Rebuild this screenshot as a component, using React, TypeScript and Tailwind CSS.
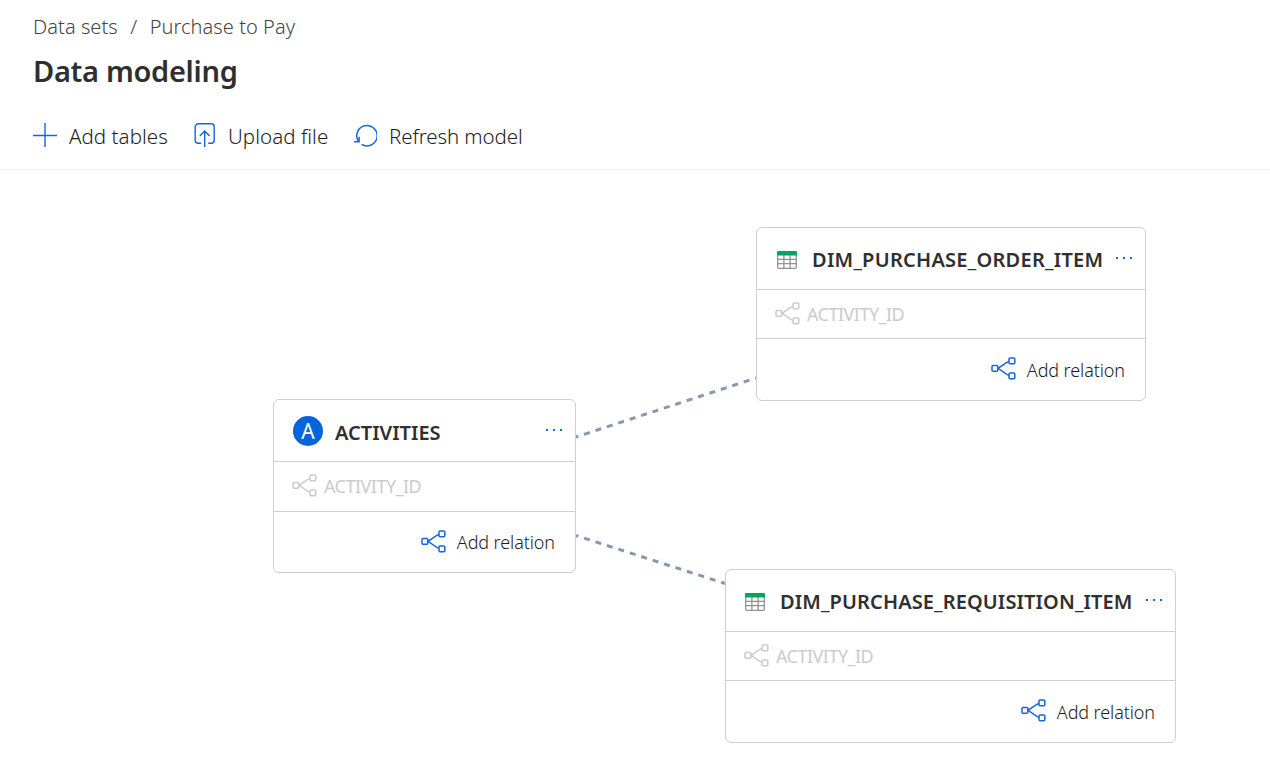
type TableNode = {
  name: string;
  kind: "activity" | "dimension";
  box: string;
  header: string;
  title: string;
  row: string;
};

const nodes: TableNode[] = [
  { name: "ACTIVITIES", kind: "activity", box: "left-[273px] top-[399px] w-[303px]", header: "pl-[19px]", title: "pt-[4px]", row: "h-[50px] pb-[1px]" },
  { name: "DIM_PURCHASE_ORDER_ITEM", kind: "dimension", box: "left-[756px] top-[227px] w-[390px]", header: "pl-[20px]", title: "pt-[2px] tracking-[0.26px]", row: "h-[49px]" },
  { name: "DIM_PURCHASE_REQUISITION_ITEM", kind: "dimension", box: "left-[725px] top-[569px] w-[451px]", header: "pl-[19px]", title: "pt-[2px] tracking-[0.12px]", row: "h-[49px]" },
];

function RelationIcon() {
  return (
    <svg width="25" height="23" viewBox="0 0 25 23" fill="none" stroke="currentColor" strokeWidth="1.5" className="mb-[2px] shrink-0">
      <rect x="1" y="8.4" width="5.8" height="5.8" rx="1" />
      <rect x="18" y="1" width="5.8" height="5.8" rx="1" />
      <rect x="18" y="16" width="5.8" height="5.8" rx="1" />
      <path d="M18 4.6 16.2 5.2 7 11.3 16.2 17.6 18 18.2" />
    </svg>
  );
}

function TableIcon() {
  return (
    <svg width="20" height="18" viewBox="0 0 20 18" fill="none" className="shrink-0">
      <path d="M.7 4v12.3a1 1 0 0 0 1 1h16.6a1 1 0 0 0 1-1V4M.7 8.3h18.6M.7 12.7h18.6M6.9 4v13.3M13.1 4v13.3" stroke="#929292" strokeWidth="1.3" />
      <path d="M0 4.5V1a1 1 0 0 1 1-1h18a1 1 0 0 1 1 1v3.5z" fill="#00a662" />
    </svg>
  );
}

function Dots() {
  return (
    <svg width="17" height="2" viewBox="0 0 17 2" fill="#1565e0" className="mb-[1px] shrink-0">
      <rect x="0" width="2" height="2" />
      <rect x="7" width="2" height="2" />
      <rect x="14" width="2" height="2" />
    </svg>
  );
}

function NodeCard({ name, kind, box, header, title, row }: TableNode) {
  return (
    <div className={`absolute flex h-[174px] flex-col rounded-[6px] border border-[#cfcfcf] bg-white ${box}`}>
      <div className={`flex h-[62px] items-center border-b border-[#cfcfcf] pr-[12px] ${header}`}>
        {kind === "activity" ? (
          <span className="mr-[12px] flex size-[30px] items-center justify-center rounded-full bg-[#0764dd] pt-px text-[21px] leading-none text-white">
            A
          </span>
        ) : (
          <span className="mt-[3px] mr-[15px]"><TableIcon /></span>
        )}
        <h2 className={`text-[20px] leading-[28px] font-semibold whitespace-nowrap ${title}`}>{name}</h2>
        <button className="ml-auto"><Dots /></button>
      </div>
      <div className={`flex items-center border-b border-[#cfcfcf] pl-[18px] text-[#cbcbcb] ${row}`}>
        <RelationIcon />
        <span className="ml-[7px] text-[18px] leading-[24px] tracking-[-0.52px]">ACTIVITY_ID</span>
      </div>
      <button className="flex flex-1 items-center justify-end pr-[20px]">
        <span className="text-[#1565e0]"><RelationIcon /></span>
        <span className="ml-[11px] text-[18px] leading-[24px] font-light tracking-[-0.1px] text-[#1c1c1c]">Add relation</span>
      </button>
    </div>
  );
}

export default function App() {
  return (
    <main className="relative h-[779px] w-[1270px] overflow-hidden bg-white font-['Noto_Sans',sans-serif] text-[#2f2f2f]">
      <header className="h-[170px] border-b border-[#f0f0f0] px-[33px] pt-[13px]">
        <nav className="flex h-[28px] items-center text-[20px] leading-[28px] font-light tracking-[0.05px] text-[#444]">
          <a>Data sets</a>
          <span className="mx-[12.5px]">/</span>
          <a>Purchase to Pay</a>
        </nav>
        <h1 className="mt-[10px] text-[29px] leading-[40px] font-semibold tracking-[-0.3px]">Data modeling</h1>

        {/* Toolbar */}
        <div className="mt-[31px] flex h-[28px] items-center text-[20.5px] leading-[28px] font-light text-[#1c1c1c]">
          <button className="flex items-center">
            <svg width="24" height="24" viewBox="0 0 24 24" fill="none" stroke="#1565e0" strokeWidth="1.4" className="mb-[2px]">
              <path d="M0 12.5h24M12 0v24" />
            </svg>
            <span className="ml-[12px] w-[99px] text-left tracking-[0.06px] whitespace-nowrap">Add tables</span>
          </button>
          <button className="ml-[26px] flex items-center">
            <svg width="22" height="24" viewBox="0 0 22 24" fill="none" stroke="#1565e0" strokeWidth="1.4" className="mb-[2px]">
              <path d="M7.2 20.2H4.2a3 3 0 0 1-3-3V3.8a3 3 0 0 1 3-3h13a3 3 0 0 1 3 3v13.4a3 3 0 0 1-3 3h-3M10.7 24V8.2M5.8 13l4.9-4.9 4.9 4.9" />
            </svg>
            <span className="ml-[12px] w-[101px] text-left tracking-[0.05px] whitespace-nowrap">Upload file</span>
          </button>
          <button className="ml-[25px] flex items-center">
            <svg width="23" height="23" viewBox="0 0 23 23" fill="none" stroke="#1565e0" strokeWidth="1.5" className="mb-[2px]">
              <path d="M7.6 20.4A10.2 10.2 0 1 0 4.7 17.7M0 17.8h5.1v-5" />
            </svg>
            <span className="ml-[12px] tracking-[-0.1px]">Refresh model</span>
          </button>
        </div>
      </header>

      {/* Relations between the tables */}
      <svg className="absolute inset-0" width="1270" height="779" fill="none" stroke="#8698b0" strokeWidth="3" strokeDasharray="6 6" strokeDashoffset="3.5">
        <path d="M576 437 756 378" />
        <path d="M576 535.5 725 583.5" />
      </svg>

      {nodes.map((n) => (
        <NodeCard key={n.name} {...n} />
      ))}
    </main>
  );
}
